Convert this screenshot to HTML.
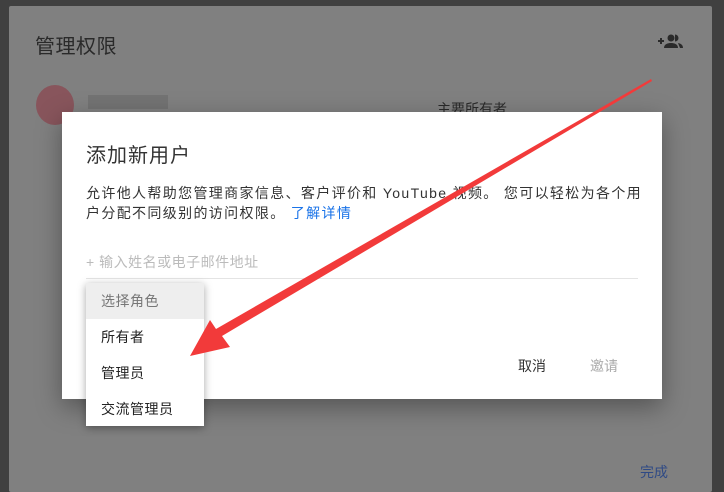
<!DOCTYPE html>
<html><head><meta charset="utf-8"><style>
*{margin:0;padding:0;box-sizing:border-box}
body{width:724px;height:492px;overflow:hidden;background:#404040;position:relative;font-family:"Liberation Sans","Noto Sans CJK SC",sans-serif}
.panel{position:absolute;left:9px;top:6px;width:703px;height:486px;background:#808080;border-radius:2px}
.t{position:absolute;white-space:nowrap}
.dlg{position:absolute;left:62px;top:112px;width:600px;height:287px;background:#fff;box-shadow:0 8px 24px rgba(0,0,0,.35)}
.menu{position:absolute;left:86px;top:283px;width:118px;height:143px;background:#fff;box-shadow:0 2px 8px rgba(0,0,0,.35)}
.menu div{height:36px;line-height:36px;padding-left:15px;font-size:14px;color:#222;letter-spacing:.5px}
</style></head><body>
<div class="panel"></div>
<div class="t" style="left:35px;top:30px;font-size:20px;color:#2a2a2a;letter-spacing:.5px">管理权限</div>
<svg style="position:absolute;left:658px;top:32px" width="26" height="18" viewBox="0 0 26 18"><path d="M0 9h6M3 6v6" stroke="#2a2a2a" stroke-width="2"/><circle cx="13" cy="6" r="3.5" fill="#2a2a2a"/><path d="M6 16c0-4 4-5 7-5s7 1 7 5z" fill="#2a2a2a"/><path d="M17 2.5a3.5 3.5 0 0 1 0 7M20 11c3 .5 5 2 5 5h-3" fill="#2a2a2a"/></svg>
<div style="position:absolute;left:36px;top:85px;width:38px;height:40px;background:#8a4a52;border-radius:50%;opacity:.8"></div>
<div style="position:absolute;left:88px;top:95px;width:80px;height:14px;background:#6a6a6a;opacity:.6"></div>
<div class="t" style="left:437px;top:99px;font-size:14px;color:#2a2a2a">主要所有者</div>
<div class="t" style="left:640px;top:462px;font-size:14px;color:#2f4a85">完成</div>
<div class="dlg"></div>
<div class="t" style="left:86px;top:139px;font-size:20px;color:#333;letter-spacing:1px">添加新用户</div>
<div class="t" style="left:86px;top:183px;font-size:14px;color:#333;line-height:20px;letter-spacing:1.35px">允许他人帮助您管理商家信息、客户评价和 YouTube 视频。 您可以轻松为各个用<br>户分配不同级别的访问权限。 <span style="color:#1a73e8">了解详情</span></div>
<div class="t" style="left:86px;top:252px;font-size:14px;color:#bbb;letter-spacing:.5px">+ 输入姓名或电子邮件地址</div>
<div style="position:absolute;left:86px;top:278px;width:552px;height:1px;background:#e4e4e4"></div>
<div class="t" style="left:518px;top:356px;font-size:14px;color:#333">取消</div>
<div class="t" style="left:590px;top:356px;font-size:14px;color:#aaa">邀请</div>
<div class="menu"><div style="background:#eee;color:#777">选择角色</div><div>所有者</div><div>管理员</div><div>交流管理员</div></div>
<svg style="position:absolute;left:0;top:0" width="724" height="492"><polygon points="651,79 652,81 222,336 230,347 190,356 210,320 216,329" fill="#f23a3a"/></svg>
</body></html>
